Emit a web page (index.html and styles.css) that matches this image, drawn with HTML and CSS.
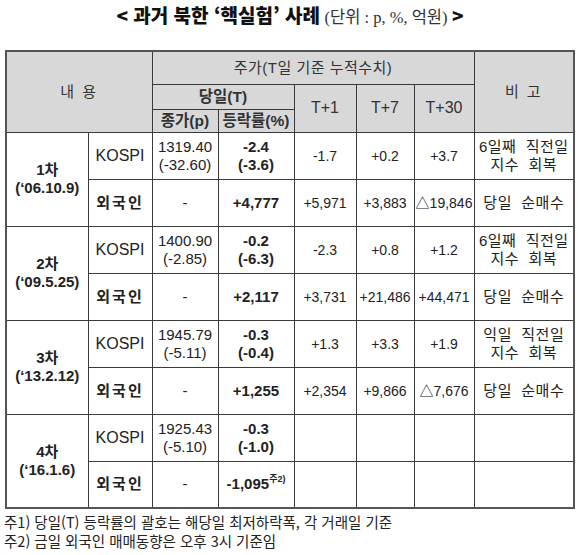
FILE: index.html
```html
<!DOCTYPE html>
<html lang="ko">
<head>
<meta charset="utf-8">
<link rel="stylesheet" href="styles.css">
</head>
<body>
<div class="title"><span class="title-main">&lt; 과거 북한 ‘핵실험’ 사례</span> <span class="title-unit">(단위 : p, %, 억원)</span> <span class="title-main">&gt;</span></div>
<table class="grid">
  <colgroup>
    <col class="c1"><col class="c2"><col class="c3"><col class="c4"><col class="c5"><col class="c6"><col class="c7"><col class="c8">
  </colgroup>
  <tr class="h1">
    <th colspan="2" rowspan="3" class="hd wide">내 용</th>
    <th colspan="5" class="hd top">주가(T일 기준 누적수치)</th>
    <th rowspan="3" class="hd wide">비 고</th>
  </tr>
  <tr class="h2">
    <th colspan="2" class="hd b">당일(T)</th>
    <th rowspan="2" class="hd dt">T+1</th>
    <th rowspan="2" class="hd dt">T+7</th>
    <th rowspan="2" class="hd dt">T+30</th>
  </tr>
  <tr class="h3">
    <th class="hd b">종가(p)</th>
    <th class="hd b">등락률(%)</th>
  </tr>

  <tr class="r">
    <td rowspan="2" class="b case">1차<br>(‘06.10.9)</td>
    <td class="kospi">KOSPI</td>
    <td class="price">1319.40<br>(-32.60)</td>
    <td class="b chg">-2.4<br>(-3.6)</td>
    <td>-1.7</td><td>+0.2</td><td>+3.7</td>
    <td class="note">6일째  직전일<br>지수  회복</td>
  </tr>
  <tr class="r dot">
    <td class="b fx">외국인</td>
    <td class="price">-</td>
    <td class="b chg">+4,777</td>
    <td>+5,971</td><td>+3,883</td><td>△19,846</td>
    <td class="note">당일  순매수</td>
  </tr>

  <tr class="r">
    <td rowspan="2" class="b case">2차<br>(‘09.5.25)</td>
    <td class="kospi">KOSPI</td>
    <td class="price">1400.90<br>(-2.85)</td>
    <td class="b chg">-0.2<br>(-6.3)</td>
    <td>-2.3</td><td>+0.8</td><td>+1.2</td>
    <td class="note">6일째  직전일<br>지수  회복</td>
  </tr>
  <tr class="r dot">
    <td class="b fx">외국인</td>
    <td class="price">-</td>
    <td class="b chg">+2,117</td>
    <td>+3,731</td><td>+21,486</td><td>+44,471</td>
    <td class="note">당일  순매수</td>
  </tr>

  <tr class="r">
    <td rowspan="2" class="b case">3차<br>(‘13.2.12)</td>
    <td class="kospi">KOSPI</td>
    <td class="price">1945.79<br>(-5.11)</td>
    <td class="b chg">-0.3<br>(-0.4)</td>
    <td>+1.3</td><td>+3.3</td><td>+1.9</td>
    <td class="note">익일  직전일<br>지수  회복</td>
  </tr>
  <tr class="r dot">
    <td class="b fx">외국인</td>
    <td class="price">-</td>
    <td class="b chg">+1,255</td>
    <td>+2,354</td><td>+9,866</td><td>△7,676</td>
    <td class="note">당일  순매수</td>
  </tr>

  <tr class="r">
    <td rowspan="2" class="b case">4차<br>(‘16.1.6)</td>
    <td class="kospi">KOSPI</td>
    <td class="price">1925.43<br>(-5.10)</td>
    <td class="b chg">-0.3<br>(-1.0)</td>
    <td></td><td></td><td></td>
    <td></td>
  </tr>
  <tr class="r dot">
    <td class="b fx">외국인</td>
    <td class="price">-</td>
    <td class="b chg">-1,095<sup class="fn">주2)</sup></td>
    <td></td><td></td><td></td>
    <td></td>
  </tr>
</table>
<div class="foot">
  <div>주1) 당일(T) 등락률의 괄호는 해당일 최저하락폭, 각 거래일 기준</div>
  <div>주2) 금일 외국인 매매동향은 오후 3시 기준임</div>
</div>
</body>
</html>
```

FILE: styles.css
```css
html, body {
  margin: 0;
  padding: 0;
  background: #fff;
}
body {
  font-family: "Liberation Sans", "Noto Sans CJK KR", sans-serif;
  color: #222;
  width: 580px;
}
.title {
  height: 50px;
  box-sizing: border-box;
  padding-top: 3px;
  text-align: center;
  white-space: nowrap;
  line-height: 24px;
}
.title-main {
  font-family: "Noto Sans CJK KR", sans-serif;
  font-weight: 900;
  font-size: 19px;
  color: #111;
}
.title-unit {
  font-family: "Liberation Serif", "Noto Sans CJK KR", serif;
  font-size: 16.5px;
  color: #333;
}
.grid {
  margin-left: 5px;
  width: 568px;
  table-layout: fixed;
  border-collapse: collapse;
  border: 2px solid #555;
  font-size: 14px;
}
.c1 { width: 82px; }
.c2 { width: 64px; }
.c3 { width: 66px; }
.c4 { width: 76px; }
.c5 { width: 62px; }
.c6 { width: 58px; }
.c7 { width: 60px; }
.c8 { width: 100px; }
.grid th, .grid td {
  border: 1px solid #3a3a3a;
  padding: 0;
  text-align: center;
  vertical-align: middle;
  line-height: 18px;
}
.grid th {
  font-weight: normal;
}
.hd {
  background: #d8d8d8;
  color: #333;
  font-size: 15px;
}
.wide {
  letter-spacing: 2px;
}
.top {
  letter-spacing: 0.5px;
}
.h1 { height: 33px; }
.h2 { height: 25px; }
.h3 { height: 23px; }
.grid .dt {
  border-top: 1px dotted #444;
  font-size: 16px;
}
.grid .b {
  font-weight: 700;
}
.grid th.b {
  font-size: 15.5px;
  color: #333;
}
.r { height: 47px; }
.grid .dot td {
  border-top: 1px dotted #555;
}
.grid td.case {
  border-top: 1px solid #3a3a3a;
  line-height: 18px;
  font-size: 15px;
}
.kospi {
  font-size: 16px;
}
.price {
  font-size: 15px;
}
.chg {
  font-size: 15px;
}
.fx {
  font-size: 15px;
  letter-spacing: 2px;
}
.note {
  white-space: pre;
  font-size: 15px;
  letter-spacing: 0.5px;
}
.fn {
  font-size: 9px;
  vertical-align: 7px;
  line-height: 0;
}
.foot {
  padding-top: 3px;
  padding-left: 4px;
  font-family: "Noto Sans CJK KR", sans-serif;
  font-size: 14.5px;
  line-height: 19px;
  color: #222;
  white-space: nowrap;
}
```
